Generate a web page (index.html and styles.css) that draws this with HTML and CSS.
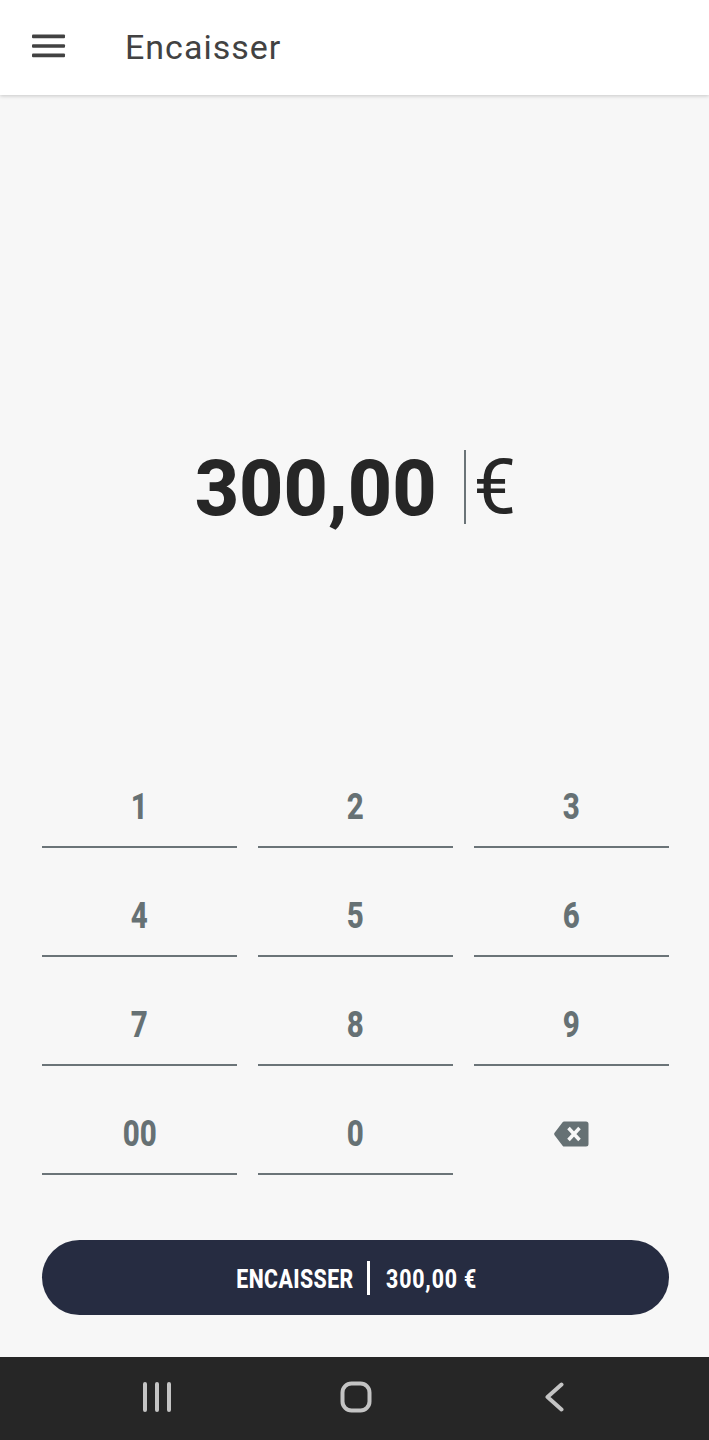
FILE: index.html
```html
<!DOCTYPE html>
<html lang="fr">
<head>
    <meta charset="UTF-8">
    <meta name="viewport" content="width=device-width, initial-scale=1.0">
    <title>Encaisser</title>
    <link rel="stylesheet" href="styles.css">
</head>
<body>
    <div class="app">
        <header class="topbar">
            <svg class="menu-icon" width="34" height="24" viewBox="0 0 34 24">
                <rect x="0" y="0.6" width="33" height="3.6" rx="1"/>
                <rect x="0" y="10.2" width="33" height="3.6" rx="1"/>
                <rect x="0" y="19.6" width="33" height="3.6" rx="1"/>
            </svg>
            <h1>Encaisser</h1>
        </header>

        <main class="content">
            <div class="amount">
                <span class="amount-value">300,00</span>
                <span class="amount-currency">€</span>
            </div>

            <div class="keypad">
                <button class="key"><span>1</span></button>
                <button class="key"><span>2</span></button>
                <button class="key"><span>3</span></button>
                <button class="key"><span>4</span></button>
                <button class="key"><span>5</span></button>
                <button class="key"><span>6</span></button>
                <button class="key"><span>7</span></button>
                <button class="key"><span>8</span></button>
                <button class="key"><span>9</span></button>
                <button class="key"><span>00</span></button>
                <button class="key"><span>0</span></button>
                <button class="key key-delete">
                    <svg width="35" height="26" viewBox="0 0 35 26">
                        <path class="delete-body" d="M10 .5H32a2.500 2.500 0 0 1 2.500 2.500V23a2.500 2.500 0 0 1-2.500 2.500H10a1.500 1.500 0 0 1-1.200-.6L.6 14.200a2 2 0 0 1 0-2.400L8.800 1.100A1.500 1.500 0 0 1 10 .5z"/>
                        <path class="delete-cross" d="M14.500 7l11 12M25.500 7l-11 12"/>
                    </svg>
                </button>
            </div>

            <button class="submit">
                <span class="submit-label">ENCAISSER</span>
                <span class="submit-sep"></span>
                <span class="submit-label submit-total">300,00 €</span>
            </button>
        </main>

        <nav class="navbar">
            <svg width="28" height="30" viewBox="0 0 28 30">
                <path d="M2 2V28M14 2V28M26 2V28"/>
            </svg>
            <svg width="32" height="32" viewBox="0 0 32 32">
                <rect x="2.500" y="2.500" width="27" height="27" rx="9"/>
            </svg>
            <svg width="24" height="30" viewBox="0 0 24 30">
                <path d="M20.500 2.500L6.500 15L20.500 27.500"/>
            </svg>
        </nav>
    </div>
</body>
</html>
```

FILE: styles.css
```css
* {
    box-sizing: border-box;
    margin: 0;
    padding: 0;
}

body {
    font-family: 'Roboto', sans-serif;
    background-color: #f7f7f7;
}

.app {
    display: flex;
    flex-direction: column;
    height: 1440px;
}

.topbar {
    display: flex;
    flex-shrink: 0;
    align-items: center;
    height: 95px;
    padding-left: 32px;
    background-color: #fff;
    box-shadow: 0 1px 4px rgba(0,0,0,0.2);
}

.menu-icon {
    fill: #424242;
    margin-right: 59px;
    margin-bottom: 3px;
}

.topbar h1 {
    font-size: 34px;
    font-weight: 400;
    letter-spacing: 1px;
    color: #424242;
    margin-bottom: 2px;
}

.content {
    flex: 1;
    display: flex;
    flex-direction: column;
    padding: 0 40px 42px 42px;
}

.amount {
    display: flex;
    justify-content: center;
    align-items: center;
    height: 74px;
    margin-top: 355px;
    margin-bottom: 215px;
}

.amount-value {
    font-size: 77px;
    font-weight: 800;
    color: #262626;
    padding-top: 3px;
    padding-right: 27px;
}

.amount-currency {
    display: flex;
    align-items: center;
    height: 74px;
    padding-left: 8px;
    border-left: 2px solid #6b7478;
    font-size: 76px;
    font-weight: 400;
    color: #262626;
}

.keypad {
    display: grid;
    grid-template-columns: repeat(3, 195px);
    column-gap: 21px;
    grid-auto-rows: 109px;
}

.key {
    display: flex;
    align-items: center;
    justify-content: center;
    background: none;
    border: none;
    border-bottom: 2px solid #6b7478;
    padding-top: 29px;
    font-family: 'Roboto', sans-serif;
    font-size: 36px;
    font-weight: 800;
    color: #667174;
}

.key span {
    display: inline-block;
    transform: scaleX(0.82);
}

.key-delete {
    border-bottom-color: transparent;
}

.delete-body {
    fill: #667174;
}

.delete-cross {
    fill: none;
    stroke: #f7f7f7;
    stroke-width: 3.5;
}

.submit {
    display: flex;
    flex-shrink: 0;
    align-items: center;
    justify-content: center;
    gap: 14px;
    height: 75px;
    margin-top: 65px;
    background-color: #262c41;
    border: none;
    border-radius: 38px;
    color: #fff;
    font-family: 'Roboto', sans-serif;
}

.submit-label {
    display: inline-block;
    font-size: 25px;
    font-weight: 800;
    letter-spacing: 0.5px;
    transform: scaleX(0.85);
    white-space: nowrap;
    margin: 3px -8px 0;
}

.submit-total {
    letter-spacing: 1px;
}

.submit-sep {
    width: 3px;
    height: 34px;
    margin: 0 2px 0 -3px;
    background-color: #fff;
}

.navbar {
    display: flex;
    flex-shrink: 0;
    justify-content: space-between;
    align-items: center;
    height: 83px;
    padding: 0 144px 3px 143px;
    background-color: #262626;
}

.navbar svg {
    fill: none;
    stroke: #c4c4c4;
    stroke-width: 4;
    stroke-linecap: round;
    stroke-linejoin: round;
}
```
